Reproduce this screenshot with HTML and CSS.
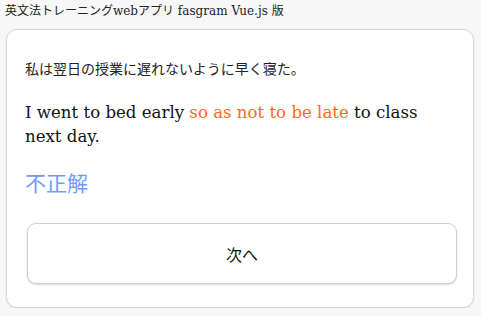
FILE: index.html
```html
<!DOCTYPE html>
<html lang="ja">
<head>
<meta charset="utf-8">
<link rel="stylesheet" href="styles.css">
</head>
<body>
<div class="title">英文法トレーニングwebアプリ fasgram Vue.js 版</div>
<div class="card">
  <p class="ja">私は翌日の授業に遅れないように早く寝た。</p>
  <p class="en">I went to bed early <span class="hl">so as not to be late</span> to class next day.</p>
  <p class="result">不正解</p>
  <button class="next">次へ</button>
</div>
</body>
</html>
```
FILE: styles.css
```css
html, body { margin: 0; padding: 0; }
body {
  background: #f7f7f7;
  padding: 3px 6px 0 6px;
  font-family: "DejaVu Serif", "Noto Sans CJK JP", serif;
}
.title {
  font-size: 12px;
  line-height: 17px;
  color: #222;
  margin-left: -1px;
}
.card {
  margin-top: 9px;
  width: 468px;
  height: 279px;
  box-sizing: border-box;
  background: #fff;
  border: 1px solid #d6d6d6;
  border-radius: 11px;
  box-shadow: 0 1px 2px rgba(0,0,0,0.08);
  padding: 28px 16px 0 18px;
  display: flex;
  flex-direction: column;
}
.ja {
  margin: 0;
  font-family: "Noto Sans CJK JP", sans-serif;
  font-size: 14px;
  line-height: 20px;
  color: #222;
}
.en {
  margin: 23px 0 0 0;
  font-size: 16.6px;
  line-height: 24px;
  color: #111;
}
.hl { color: #ff6a1c; }
.result {
  margin: 18px 0 0 0;
  font-family: "Noto Sans CJK JP", sans-serif;
  font-size: 21px;
  line-height: 30px;
  color: #6e9cff;
}
.next {
  margin: 26px 0 0 2px;
  height: 61px;
  background: #fff;
  border: 1px solid #cfcfcf;
  border-radius: 9px;
  box-shadow: 0 1px 2px rgba(0,0,0,0.15);
  font-family: "Noto Sans CJK JP", sans-serif;
  font-size: 16px;
  color: #111;
}
```
